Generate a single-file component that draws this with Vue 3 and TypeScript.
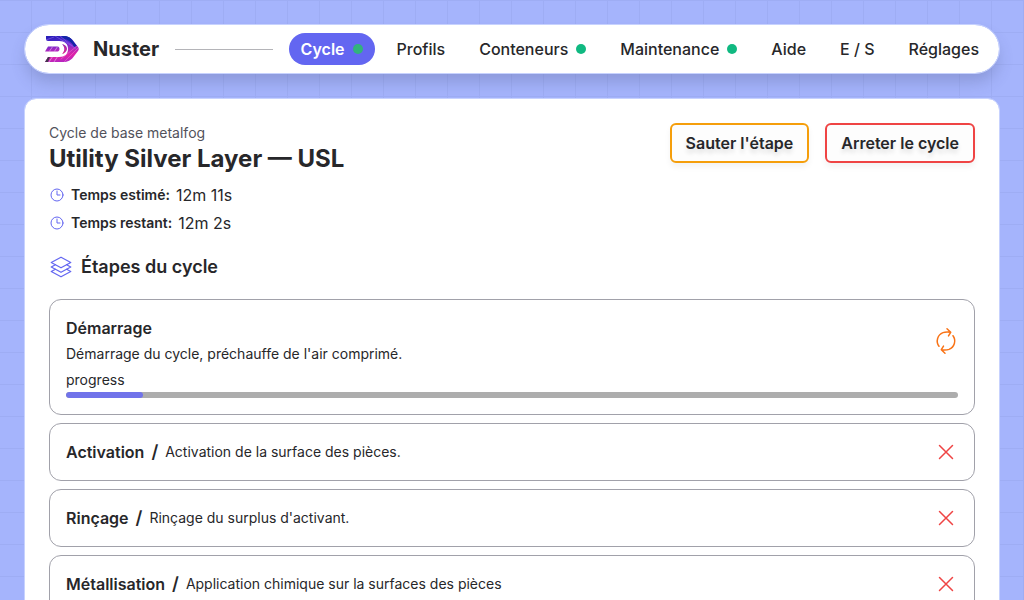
<script setup lang="ts">
interface NavItem {
  label: string
  href: string
  active?: boolean
  status?: boolean
}

interface Step {
  name: string
  description: string
}

const navItems: NavItem[] = [
  { label: 'Cycle', href: '#cycle', active: true, status: true },
  { label: 'Profils', href: '#profils' },
  { label: 'Conteneurs', href: '#conteneurs', status: true },
  { label: 'Maintenance', href: '#maintenance', status: true },
  { label: 'Aide', href: '#aide' },
  { label: 'E / S', href: '#es' },
  { label: 'Réglages', href: '#reglages' },
]

const timings = [
  { label: 'Temps estimé:', value: '12m 11s' },
  { label: 'Temps restant:', value: '12m 2s' },
]

const progress = 8.6

const pendingSteps: Step[] = [
  { name: 'Activation', description: 'Activation de la surface des pièces.' },
  { name: 'Rinçage', description: "Rinçage du surplus d'activant." },
  { name: 'Métallisation', description: 'Application chimique sur la surfaces des pièces' },
]
</script>

<template>
  <div class="layout">
    <header class="topbar">
      <svg class="logo" viewBox="0 0 34 26" aria-hidden="true">
        <defs>
          <linearGradient id="logo-fill" x1="0.45" y1="0" x2="0.6" y2="1">
            <stop offset="0" stop-color="#2a20b8" />
            <stop offset="0.25" stop-color="#5a2ad0" />
            <stop offset="0.5" stop-color="#a828c0" />
            <stop offset="0.75" stop-color="#e022a8" />
            <stop offset="1" stop-color="#b026c4" />
          </linearGradient>
          <clipPath id="logo-shape">
            <path d="M1 0H18C23 0 26 2 28 4.500L33 11Q34.500 13 33 15L28 21.500C26 24 23 26 18 26H0L3 21H14C20 21 23 18 23 13S20 5 14 5H3Q1 5 1 3Z" />
            <path d="M3 10.500H13C15 11.500 15 14.500 13 15.500H0Z" />
            <path d="M17 8C21 9 22 11 22 13S20 17.500 17 18C20 15 20 11 17 8Z" />
          </clipPath>
        </defs>
        <g clip-path="url(#logo-shape)">
          <rect width="34" height="26" fill="url(#logo-fill)" />
          <path d="M17 0H24L32 10L29 11Q26 4 17 2Z" fill="#1426a8" />
          <path d="M0 21H5L3 26H0Z" fill="#46334f" />
          <g fill="none" stroke-width="0.600">
            <path d="M1 4L9 1M10 0L27 10M15 0L31 13" stroke="#8b62f0" />
            <path d="M4 26L8 20M9 26L13 20M4 16L8 10M9 16L13 10" stroke="#f0c0f4" />
            <path d="M19 26L33 12M16 23L32 10" stroke="#f26ccb" />
            <path d="M18 8L21 13L18 18" stroke="#ef3355" />
          </g>
        </g>
      </svg>
      <span class="brand">Nuster</span>
      <span class="rule"></span>
      <nav class="nav" aria-label="Navigation principale">
        <a
          v-for="item in navItems"
          :key="item.label"
          class="nav-link"
          :class="{ active: item.active }"
          :href="item.href"
          :aria-current="item.active ? 'page' : undefined"
        >
          {{ item.label }}
          <span v-if="item.status" class="dot"></span>
        </a>
      </nav>
    </header>

    <main class="panel">
      <div class="panel-head">
        <div class="summary">
          <p class="profile">Cycle de base metalfog</p>
          <h1 class="title">Utility Silver Layer — USL</h1>
          <p v-for="timing in timings" :key="timing.label" class="timing">
            <svg class="clock" viewBox="0 0 24 24" aria-hidden="true">
              <path d="M12 6v6h4.500m4.500 0a9 9 0 1 1-18 0 9 9 0 0 1 18 0Z" />
            </svg>
            <strong>{{ timing.label }}</strong>
            <span>{{ timing.value }}</span>
          </p>
        </div>
        <div class="actions">
          <button type="button" class="action skip"><span>Sauter l'étape</span></button>
          <button type="button" class="action stop"><span>Arreter le cycle</span></button>
        </div>
      </div>

      <h2 class="section-title">
        <svg class="layers" viewBox="0 0 24 24" aria-hidden="true">
          <path d="M6.429 9.750 2.250 12l4.179 2.250m0-4.500 5.571 3 5.571-3m-11.142 0L2.250 7.500 12 2.250l9.750 5.250-4.179 2.250m0 0L21.750 12l-4.179 2.250m0 0 4.179 2.250L12 21.750 2.250 16.500l4.179-2.250m11.142 0-5.571 3-5.571-3" />
        </svg>
        Étapes du cycle
      </h2>

      <ol class="steps">
        <li class="step running">
          <div class="step-row">
            <div>
              <h3 class="step-name">Démarrage</h3>
              <p class="step-text">Démarrage du cycle, préchauffe de l'air comprimé.</p>
            </div>
            <svg class="sync" viewBox="0 0 24 28" aria-hidden="true">
              <path d="M5 19.300A9 9 0 0 1 9 5.600Q12 4.600 16.700 5.300M13 1.700L16.700 5.300L14.500 8.900M19 8.700A9 9 0 0 1 15 22.400Q12 23.400 7.300 22.700M11 26.300L7.300 22.700L9.500 19.100" />
            </svg>
          </div>
          <p id="progress-label" class="step-text">progress</p>
          <div
            class="track"
            role="progressbar"
            aria-labelledby="progress-label"
            aria-valuemin="0"
            aria-valuemax="100"
            :aria-valuenow="progress"
          >
            <div class="bar" :style="{ width: progress + '%' }"></div>
          </div>
        </li>
        <li v-for="step in pendingSteps" :key="step.name" class="step pending">
          <h3 class="step-name">{{ step.name }}</h3>
          <span class="slash">/</span>
          <p class="step-text">{{ step.description }}</p>
          <svg class="cross" viewBox="0 0 24 24" aria-hidden="true">
            <path d="M5.500 5.500l13 13M18.500 5.500l-13 13" />
          </svg>
        </li>
      </ol>
    </main>
  </div>
</template>

<style>
body {
  margin: 0;
  background: #a5b4fc;
}
</style>

<style scoped>
.layout {
  box-sizing: border-box;
  height: 100vh;
  overflow: hidden;
  padding: 24px;
  display: flex;
  flex-direction: column;
  gap: 24px;
  color: #27272a;
  font-family: Inter, "Liberation Sans", sans-serif;
  font-size: 16px;
  line-height: 24px;
  background-color: #a5b4fc;
  background-image:
    linear-gradient(#9eadf4 1px, transparent 1px),
    linear-gradient(to left, #9eadf4 1px, transparent 1px);
  background-size: 32px 32px;
}

h1,
h2,
h3,
p,
ol {
  margin: 0;
  padding: 0;
}

svg {
  flex: none;
  fill: none;
  stroke-linecap: round;
  stroke-linejoin: round;
}

.topbar {
  flex: none;
  display: flex;
  align-items: center;
  gap: 16px;
  padding: 8px 8px 8px 20px;
  border: 1px solid #c7d2fe;
  border-radius: 25px;
  background: #fff;
  background-clip: padding-box;
  box-shadow: 0 10px 16px -2px rgb(60 65 110 / 24%);
}

.logo {
  width: 34px;
  height: 26px;
  margin-right: -2px;
}

.brand {
  font-size: 20px;
  font-weight: 700;
}

.rule {
  flex: 1;
  height: 1px;
  background: #b4b4b8;
}

.nav {
  display: flex;
  gap: 10px;
}

.nav-link {
  display: flex;
  align-items: center;
  gap: 8px;
  padding: 4px 12px;
  border-radius: 16px;
  color: inherit;
  font-weight: 500;
  text-decoration: none;
}

.nav-link.active {
  background: #6366f1;
  color: #fff;
  font-weight: 600;
}

.dot {
  width: 10px;
  height: 10px;
  border-radius: 50%;
  background: #10b981;
}

.active .dot {
  background: #31b37c;
}

.panel {
  flex: none;
  padding: 24px;
  border: 1px solid #c7d2fe;
  border-radius: 12px;
  background: #fff;
  background-clip: padding-box;
}

.panel-head {
  display: flex;
  justify-content: space-between;
  align-items: flex-start;
}

.profile {
  color: #52525b;
  font-size: 14px;
  line-height: 20px;
}

.title {
  margin-bottom: 6px;
  font-size: 24px;
  font-weight: 700;
  line-height: 32px;
}

.timing {
  display: flex;
  align-items: center;
  gap: 6px;
  line-height: 28px;
}

.timing strong {
  font-size: 14px;
  font-weight: 600;
}

.clock {
  width: 16px;
  height: 16px;
  stroke: #6366f1;
  stroke-width: 1.500;
}

.actions {
  display: flex;
  gap: 16px;
}

.action {
  padding: 6px 14px;
  border: 2px solid;
  border-radius: 6px;
  background: #fdfdfd;
  color: #27272a;
  font: inherit;
  font-weight: 600;
  box-shadow: 0 4px 6px rgb(0 0 0 / 5%);
}

.action span {
  text-shadow: 0 4px 4px rgb(0 0 0 / 12%);
}

.skip {
  border-color: #f59e0b;
}

.stop {
  border-color: #ef4444;
}

.section-title {
  display: flex;
  align-items: center;
  gap: 8px;
  margin: 16px 0 18px;
  font-size: 18px;
  font-weight: 600;
  line-height: 28px;
}

.layers {
  width: 24px;
  height: 24px;
  stroke: #6366f1;
  stroke-width: 1.250;
}

.steps {
  display: flex;
  flex-direction: column;
  gap: 8px;
  list-style: none;
}

.step {
  padding: 16px;
  border: 1px solid #a1a1aa;
  border-radius: 12px;
}

.step-row {
  display: flex;
  align-items: center;
  justify-content: space-between;
  margin-bottom: 2px;
}

.step-row .step-name {
  margin-bottom: 2px;
}

.step-name {
  font-size: 16px;
  font-weight: 600;
}

.step-text {
  font-size: 14px;
  line-height: 24px;
}

.sync {
  width: 24px;
  height: 28px;
  stroke: #f97316;
  stroke-width: 1.500;
}

.cross {
  width: 24px;
  height: 24px;
  margin-left: auto;
  stroke: #ef4444;
  stroke-width: 1.500;
}

.track {
  height: 6px;
  border-radius: 3px;
  background: #adadad;
  overflow: hidden;
}

.bar {
  height: 100%;
  border-radius: 3px;
  background: #7173ea;
}

.pending {
  display: flex;
  align-items: center;
  gap: 7px;
}

.slash {
  font-size: 18px;
  font-weight: 600;
}
</style>
